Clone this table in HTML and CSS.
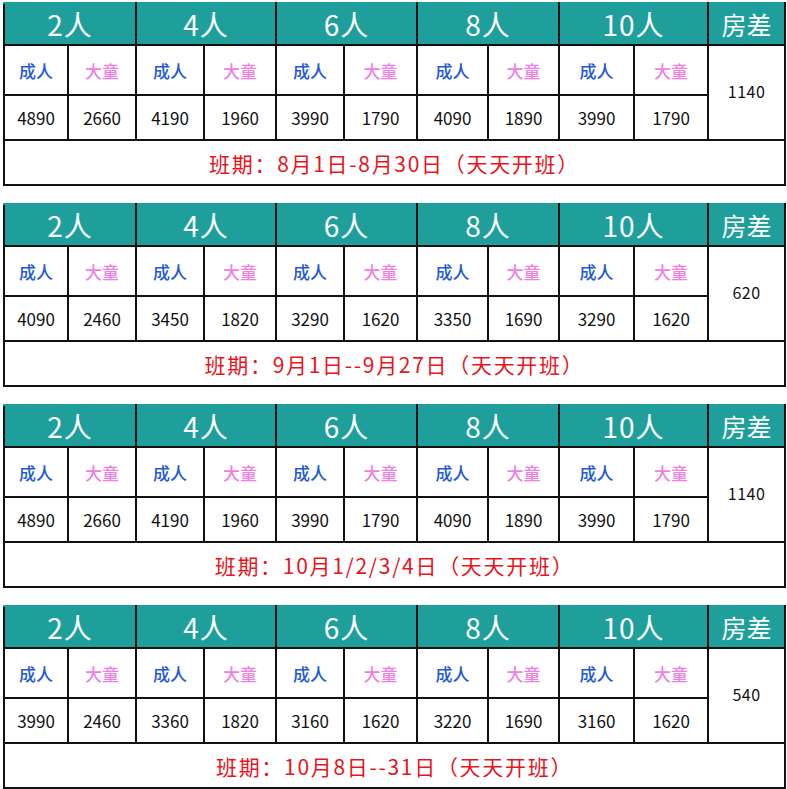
FILE: index.html
```html
<!DOCTYPE html>
<html lang="zh-CN">
<head>
<meta charset="utf-8">
<title>价格表</title>
<link rel="stylesheet" href="styles.css">
</head>
<body>
<div class="sheet">

<table class="price">
<colgroup><col class="c1"><col class="c2"><col class="c3"><col class="c4"><col class="c5"><col class="c6"><col class="c7"><col class="c8"><col class="c9"><col class="c10"><col class="c11"></colgroup>
<tr class="head"><th colspan="2">2人</th><th colspan="2">4人</th><th colspan="2">6人</th><th colspan="2">8人</th><th colspan="2">10人</th><th class="fc">房差</th></tr>
<tr class="labels"><td class="adult">成人</td><td class="child">大童</td><td class="adult">成人</td><td class="child">大童</td><td class="adult">成人</td><td class="child">大童</td><td class="adult">成人</td><td class="child">大童</td><td class="adult gl">成人</td><td class="child">大童</td><td class="diff" rowspan="2">1140</td></tr>
<tr class="nums"><td>4890</td><td>2660</td><td>4190</td><td>1960</td><td>3990</td><td>1790</td><td>4090</td><td>1890</td><td class="gl">3990</td><td>1790</td></tr>
<tr class="period"><td colspan="11">班期：8月1日-8月30日（天天开班）</td></tr>
</table>

<table class="price">
<colgroup><col class="c1"><col class="c2"><col class="c3"><col class="c4"><col class="c5"><col class="c6"><col class="c7"><col class="c8"><col class="c9"><col class="c10"><col class="c11"></colgroup>
<tr class="head"><th colspan="2">2人</th><th colspan="2">4人</th><th colspan="2">6人</th><th colspan="2">8人</th><th colspan="2">10人</th><th class="fc">房差</th></tr>
<tr class="labels"><td class="adult">成人</td><td class="child">大童</td><td class="adult">成人</td><td class="child">大童</td><td class="adult">成人</td><td class="child">大童</td><td class="adult">成人</td><td class="child">大童</td><td class="adult gl">成人</td><td class="child">大童</td><td class="diff" rowspan="2">620</td></tr>
<tr class="nums"><td>4090</td><td>2460</td><td>3450</td><td>1820</td><td>3290</td><td>1620</td><td>3350</td><td>1690</td><td class="gl">3290</td><td>1620</td></tr>
<tr class="period"><td colspan="11">班期：9月1日--9月27日（天天开班）</td></tr>
</table>

<table class="price">
<colgroup><col class="c1"><col class="c2"><col class="c3"><col class="c4"><col class="c5"><col class="c6"><col class="c7"><col class="c8"><col class="c9"><col class="c10"><col class="c11"></colgroup>
<tr class="head"><th colspan="2">2人</th><th colspan="2">4人</th><th colspan="2">6人</th><th colspan="2">8人</th><th colspan="2">10人</th><th class="fc">房差</th></tr>
<tr class="labels"><td class="adult">成人</td><td class="child">大童</td><td class="adult">成人</td><td class="child">大童</td><td class="adult">成人</td><td class="child">大童</td><td class="adult">成人</td><td class="child">大童</td><td class="adult gl">成人</td><td class="child">大童</td><td class="diff" rowspan="2">1140</td></tr>
<tr class="nums"><td>4890</td><td>2660</td><td>4190</td><td>1960</td><td>3990</td><td>1790</td><td>4090</td><td>1890</td><td class="gl">3990</td><td>1790</td></tr>
<tr class="period"><td colspan="11">班期：10月1/2/3/4日（天天开班）</td></tr>
</table>

<table class="price">
<colgroup><col class="c1"><col class="c2"><col class="c3"><col class="c4"><col class="c5"><col class="c6"><col class="c7"><col class="c8"><col class="c9"><col class="c10"><col class="c11"></colgroup>
<tr class="head"><th colspan="2">2人</th><th colspan="2">4人</th><th colspan="2">6人</th><th colspan="2">8人</th><th colspan="2">10人</th><th class="fc">房差</th></tr>
<tr class="labels"><td class="adult">成人</td><td class="child">大童</td><td class="adult">成人</td><td class="child">大童</td><td class="adult">成人</td><td class="child">大童</td><td class="adult">成人</td><td class="child">大童</td><td class="adult gl">成人</td><td class="child">大童</td><td class="diff" rowspan="2">540</td></tr>
<tr class="nums"><td>3990</td><td>2460</td><td>3360</td><td>1820</td><td>3160</td><td>1620</td><td>3220</td><td>1690</td><td class="gl">3160</td><td>1620</td></tr>
<tr class="period"><td colspan="11">班期：10月8日--31日（天天开班）</td></tr>
</table>

</div>
</body>
</html>
```

FILE: styles.css
```css
html, body {
  margin: 0;
  padding: 0;
  background: #ffffff;
}

.sheet {
  padding: 2px 0 0 3px;
  display: flex;
  flex-direction: column;
  gap: 17px;
}

.price {
  border-collapse: collapse;
  table-layout: fixed;
  width: 781px;
  font-family: "Noto Sans CJK SC", "Noto Sans", sans-serif;
}

.c1 { width: 64px; }
.c2 { width: 68px; }
.c3 { width: 68px; }
.c4 { width: 72px; }
.c5 { width: 68px; }
.c6 { width: 73px; }
.c7 { width: 71px; }
.c8 { width: 71px; }
.c9 { width: 75px; }
.c10 { width: 74px; }
.c11 { width: 77px; }

.price th,
.price td {
  border: 2px solid #111111;
  padding: 0;
  text-align: center;
  vertical-align: middle;
}

.price th {
  border-top-color: #1e9f9c;
}

.head {
  height: 42px;
}

.head th {
  background: #1e9f9c;
  color: #ffffff;
  font-weight: 400;
  font-size: 28px;
  line-height: 1;
  letter-spacing: 1px;
}

.head th.fc {
  font-size: 25px;
  letter-spacing: 0;
}

.labels {
  height: 50px;
}

.labels td {
  font-size: 17px;
  font-weight: 500;
}

.labels td.adult {
  color: #2359d6;
}

.labels td.child {
  color: #ef7fe6;
}

.nums {
  height: 45px;
}

.nums td {
  font-size: 17px;
  color: #111111;
}

.price td.diff {
  font-size: 16px;
  font-weight: 400;
  letter-spacing: 0.5px;
  color: #111111;
  padding-bottom: 4px;
}

.price td.gl {
  border-left-color: #8a8a8a;
}

.period {
  height: 45px;
}

.period td {
  color: #e8141c;
  font-size: 21px;
  font-weight: 400;
  letter-spacing: 1.7px;
}
```
